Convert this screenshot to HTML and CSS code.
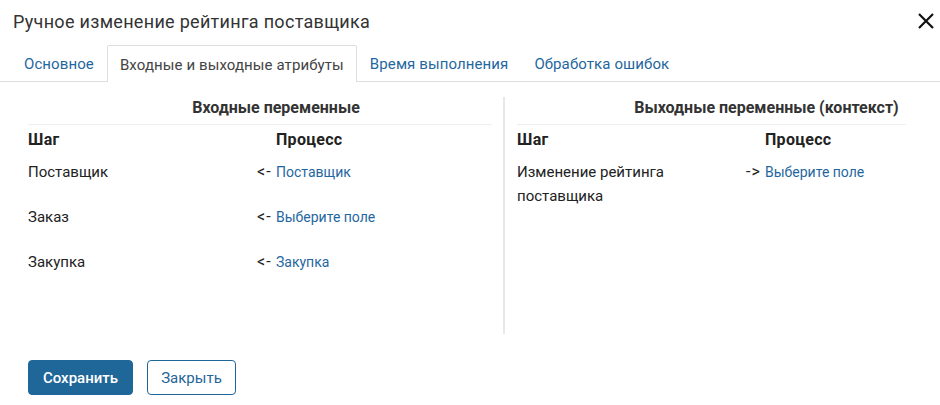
FILE: index.html
```html
<!DOCTYPE html>
<html lang="ru">
<head>
  <meta charset="UTF-8">
  <title>Ручное изменение рейтинга поставщика</title>
  <link rel="stylesheet" href="styles.css">
</head>
<body>
  <div class="modal">
    <div class="modal-header">
      <h1>Ручное изменение рейтинга поставщика</h1>
      <button class="close" aria-label="Закрыть">
        <svg width="18" height="18" viewBox="0 0 18 18"><path d="M2 2L16 16M16 2L2 16" stroke="#111" stroke-width="2.2" fill="none"/></svg>
      </button>
    </div>
    <div class="tabs">
      <a class="tab">Основное</a>
      <a class="tab active">Входные и выходные атрибуты</a>
      <a class="tab">Время выполнения</a>
      <a class="tab">Обработка ошибок</a>
    </div>
    <div class="columns">
      <div class="section section-in">
        <div class="section-title">Входные переменные</div>
        <div class="grid">
          <div class="head">Шаг</div><div></div><div class="head">Процесс</div>
          <div class="cell">Поставщик</div><div class="cell arrow">&lt;-</div><div class="cell"><a>Поставщик</a></div>
          <div class="cell">Заказ</div><div class="cell arrow">&lt;-</div><div class="cell"><a>Выберите поле</a></div>
          <div class="cell">Закупка</div><div class="cell arrow">&lt;-</div><div class="cell"><a>Закупка</a></div>
        </div>
      </div>
      <div class="divider"></div>
      <div class="section section-out">
        <div class="section-title">Выходные переменные (контекст)</div>
        <div class="grid">
          <div class="head">Шаг</div><div></div><div class="head">Процесс</div>
          <div class="cell">Изменение рейтинга поставщика</div><div class="cell arrow">-&gt;</div><div class="cell"><a>Выберите поле</a></div>
        </div>
      </div>
    </div>
    <div class="footer">
      <button class="btn btn-primary">Сохранить</button>
      <button class="btn btn-default">Закрыть</button>
    </div>
  </div>
</body>
</html>
```

FILE: styles.css
```css
body {
  margin: 0;
  background: #fff;
  color: #222;
  font-family: Roboto, "Noto Sans", sans-serif;
  font-size: 15px;
}
.modal {
  width: 940px;
  height: 405px;
  overflow: hidden;
}
.modal-header {
  display: flex;
  align-items: center;
  justify-content: space-between;
  height: 45px;
  padding: 0 3px 0 13px;
}
.modal-header h1 {
  margin: 0;
  font-size: 18px;
  font-weight: 400;
  letter-spacing: 0.3px;
  color: #333;
  margin-top: -2px;
}
.close {
  background: none;
  border: none;
  padding: 0;
  width: 22px;
  height: 22px;
  display: flex;
  align-items: center;
  justify-content: center;
  margin-top: -4px;
}
.tabs {
  display: flex;
  padding-left: 11px;
  border-bottom: 1px solid #ddd;
  height: 36px;
}
.tab {
  display: flex;
  align-items: center;
  padding: 0 12px;
  color: #1f67a0;
  letter-spacing: 0.1px;
  border: 1px solid transparent;
  border-bottom: none;
  border-radius: 2px 2px 0 0;
  height: 36px;
  margin-bottom: -1px;
  box-sizing: border-box;
  padding-top: 1px;
}
.tab.active {
  color: #444;
  background: #fff;
  border-color: #ddd;
  height: 37px;
}
.columns {
  display: grid;
  grid-template-columns: 464px 1px 389px;
  column-gap: 12px;
  padding: 15px 0 0 28px;
  height: 237px;
}
.divider {
  background: #e8e8e8;
  margin-left: -1px;
}
.section-title {
  text-align: center;
  font-size: 16px;
  font-weight: 700;
  color: #333;
  line-height: 22px;
  padding-bottom: 5px;
  border-bottom: 1px solid #eee;
}
.section-in .section-title {
  padding-left: 32px;
}
.section-out .section-title {
  padding-left: 110px;
}
.grid {
  display: grid;
  grid-template-columns: 229px 19px 1fr;
}
.head {
  font-size: 16px;
  font-weight: 700;
  letter-spacing: 0.3px;
  color: #222;
  line-height: 30px;
}
.cell {
  line-height: 24px;
  padding: 5px 0 16px;
}
.arrow {
  color: #222;
  font-size: 16px;
  letter-spacing: 1px;
}
.cell a {
  color: #1f67a0;
  font-size: 14px;
}
.footer {
  display: flex;
  gap: 14px;
  padding: 26px 0 0 28px;
}
.btn {
  height: 35px;
  border-radius: 4px;
  font-family: Roboto, "Noto Sans", sans-serif;
  font-size: 15px;
  padding: 0 10px;
  cursor: pointer;
}
.btn-primary {
  background: #1f6699;
  border: 1px solid #1f6699;
  color: #fff;
  font-weight: 500;
  width: 105px;
}
.btn-default {
  background: #fff;
  border: 1px solid #1f6699;
  color: #1f6699;
  width: 89px;
}
```
